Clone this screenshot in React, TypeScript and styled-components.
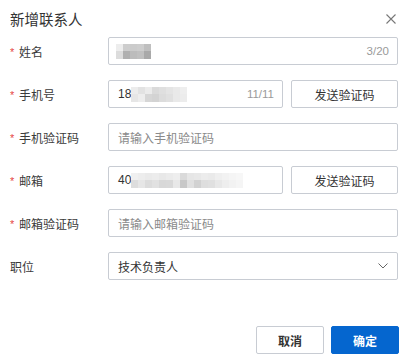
import React from 'react';
import styled, { createGlobalStyle } from 'styled-components';

const GlobalStyle = createGlobalStyle`
  html, body {
    margin: 0;
    padding: 0;
    background: #ffffff;
  }
  body {
    font-family: "Noto Sans CJK SC", "Liberation Sans", sans-serif;
    color: #333333;
  }
  * {
    box-sizing: border-box;
  }
`;

const Dialog = styled.div`
  width: 408px;
  height: 361px;
  background: #ffffff;
  display: flex;
  flex-direction: column;
`;

const Header = styled.div`
  height: 33px;
  padding: 4px 10px 0 10px;
  display: flex;
  align-items: center;
  justify-content: space-between;
`;

const Title = styled.div`
  font-size: 14.5px;
  color: #333333;
  line-height: 20px;
`;

const CloseBtn = styled.div`
  width: 16px;
  height: 16px;
  display: flex;
  align-items: center;
  justify-content: center;
  margin-right: -1px;
`;

const Form = styled.div`
  margin-top: 4px;
  padding: 0 10px;
  display: flex;
  flex-direction: column;
  gap: 15px;
`;

const Row = styled.div`
  display: flex;
  align-items: center;
  height: 28px;
`;

const Label = styled.div`
  width: 98px;
  flex-shrink: 0;
  font-size: 12px;
  color: #3a3a3a;
  display: flex;
  align-items: center;
`;

const Star = styled.span`
  width: 9px;
  color: #e54545;
  font-size: 11px;
  font-family: "Liberation Sans", sans-serif;
  position: relative;
  top: 1px;
`;

const Controls = styled.div`
  flex: 1;
  display: flex;
  gap: 8px;
  height: 100%;
`;

const Input = styled.div<{ $pl?: number }>`
  flex: 1;
  height: 28px;
  border: 1px solid #c8ccd3;
  border-radius: 2px;
  display: flex;
  align-items: center;
  padding: 0 8px 0 ${(p) => p.$pl ?? 9}px;
  font-size: 12px;
  color: #333333;
`;

const Placeholder = styled.span`
  color: #8a8a8a;
`;

const Value = styled.span`
  font-family: "Liberation Sans", "Noto Sans CJK SC", sans-serif;
  color: #333333;
`;

const Counter = styled.span`
  margin-left: auto;
  color: #9a9a9a;
  font-size: 11.5px;
  font-family: "Liberation Sans", sans-serif;
`;

const Mosaic = styled.span`
  display: grid;
  grid-auto-flow: column;
  grid-template-rows: 7px 8px;
`;

const Cell = styled.span<{ $c: string }>`
  width: 7px;
  background: ${(p) => p.$c};
`;

const SendBtn = styled.button`
  width: 107px;
  height: 28px;
  border: 1px solid #c8ccd3;
  border-radius: 2px;
  background: #ffffff;
  font-size: 12px;
  font-family: "Noto Sans CJK SC", sans-serif;
  color: #333333;
  padding: 0;
`;

const Footer = styled.div`
  margin-top: auto;
  padding: 0 9px 7px 0;
  display: flex;
  justify-content: flex-end;
  gap: 7px;
`;

const Btn = styled.button<{ $primary?: boolean }>`
  width: 68px;
  height: 28px;
  border-radius: 2px;
  border: 1px solid ${(p) => (p.$primary ? '#0566cf' : '#c8ccd3')};
  background: ${(p) => (p.$primary ? '#0566cf' : '#ffffff')};
  color: ${(p) => (p.$primary ? '#ffffff' : '#333333')};
  font-size: 12px;
  font-weight: 700;
  font-family: "Noto Sans CJK SC", sans-serif;
  padding: 0;
`;

const Chevron = () => (
  <svg width="10" height="6" viewBox="0 0 10 6" style={{ marginLeft: 'auto', marginRight: '1px' }}>
    <path d="M0.5 0.5 L5 5 L9.5 0.5" fill="none" stroke="#666" strokeWidth="1" />
  </svg>
);

const pixels = (cols: string[][]) => (
  <Mosaic>
    {cols.map((col, i) =>
      col.map((c, j) => <Cell key={`${i}-${j}`} $c={c} />)
    )}
  </Mosaic>
);

const nameBlur = [
  ['#ededed', '#dcdcdc'],
  ['#cdcdcd', '#b0b0b0'],
  ['#cbcbcb', '#bcbcbc'],
  ['#cdcdcd', '#c0c0c0'],
  ['#bfbfbf', '#a9a9a9'],
];

const phoneBlur = [
  ['#ececec', '#e6e6e6'],
  ['#e2e2e2', '#ededed'],
  ['#ebebeb', '#d6d6d6'],
  ['#dadada', '#d3d3d3'],
  ['#dfdfdf', '#dcdcdc'],
  ['#e4e4e4', '#e0e0e0'],
  ['#e9e9e9', '#e9e9e9'],
  ['#eeeeee', '#ececec'],
];

const emailBlur = [
  ['#f0f0f0', '#dddddd'],
  ['#ededed', '#e6e6e6'],
  ['#eaeaea', '#dcdcdc'],
  ['#ececec', '#e1e1e1'],
  ['#e8e8e8', '#d8d8d8'],
  ['#ebebeb', '#d9d9d9'],
  ['#eeeeee', '#e8e8e8'],
  ['#dadada', '#c8c8c8'],
  ['#e6e6e6', '#e0e0e0'],
  ['#e8e8e8', '#d2d2d2'],
  ['#ececec', '#dedede'],
  ['#eaeaea', '#e0e0e0'],
  ['#efefef', '#e8e8e8'],
  ['#f2f2f2', '#eeeeee'],
  ['#f5f5f5', '#f2f2f2'],
  ['#f7f7f7', '#f5f5f5'],
];

export default function App() {
  return (
    <>
      <GlobalStyle />
      <Dialog>
        <Header>
          <Title>新增联系人</Title>
          <CloseBtn>
            <svg width="10" height="10" viewBox="0 0 10 10">
              <path d="M0.5 0.5 L9.5 9.5 M9.5 0.5 L0.5 9.5" stroke="#777" strokeWidth="1.1" />
            </svg>
          </CloseBtn>
        </Header>
        <Form>
          <Row>
            <Label><Star>*</Star>姓名</Label>
            <Controls>
              <Input $pl={7}>
                {pixels(nameBlur)}
                <Counter>3/20</Counter>
              </Input>
            </Controls>
          </Row>
          <Row>
            <Label><Star>*</Star>手机号</Label>
            <Controls>
              <Input>
                <Value>18</Value>
                {pixels(phoneBlur)}
                <Counter>11/11</Counter>
              </Input>
              <SendBtn>发送验证码</SendBtn>
            </Controls>
          </Row>
          <Row>
            <Label><Star>*</Star>手机验证码</Label>
            <Controls>
              <Input><Placeholder>请输入手机验证码</Placeholder></Input>
            </Controls>
          </Row>
          <Row>
            <Label><Star>*</Star>邮箱</Label>
            <Controls>
              <Input>
                <Value>40</Value>
                {pixels(emailBlur)}
              </Input>
              <SendBtn>发送验证码</SendBtn>
            </Controls>
          </Row>
          <Row>
            <Label><Star>*</Star>邮箱验证码</Label>
            <Controls>
              <Input><Placeholder>请输入邮箱验证码</Placeholder></Input>
            </Controls>
          </Row>
          <Row>
            <Label>职位</Label>
            <Controls>
              <Input>
                <span>技术负责人</span>
                <Chevron />
              </Input>
            </Controls>
          </Row>
        </Form>
        <Footer>
          <Btn>取消</Btn>
          <Btn $primary>确定</Btn>
        </Footer>
      </Dialog>
    </>
  );
}
